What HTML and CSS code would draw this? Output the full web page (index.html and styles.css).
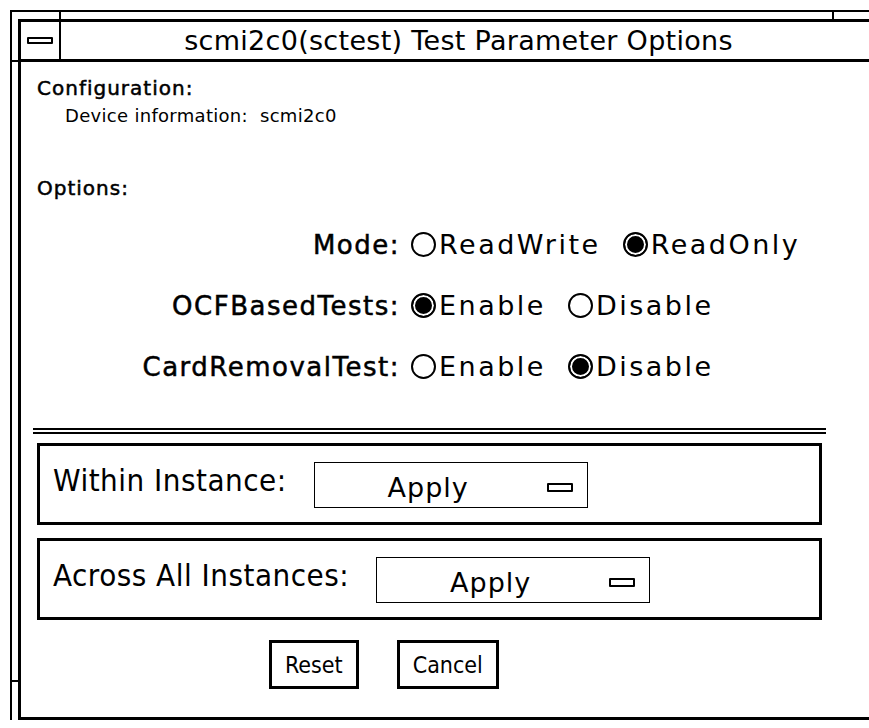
FILE: index.html
```html
<!DOCTYPE html>
<html lang="en">

<head>
    <meta charset="UTF-8">
    <meta name="viewport" content="width=device-width, initial-scale=1.0">
    <title>scmi2c0(sctest) Test Parameter Options</title>
    <link rel="stylesheet" href="styles.css">
</head>

<body>
    <div class="frame">
        <span class="tick tick-top-left"></span>
        <span class="tick tick-top-right"></span>
        <span class="tick tick-left-top"></span>
        <span class="tick tick-left-bottom"></span>
        <span class="tick tick-bottom-left"></span>
        <span class="tick tick-bottom-right"></span>

        <div class="window">
            <div class="titlebar">
                <div class="closebox"><span class="mini-rect"></span></div>
                <div class="title">scmi2c0(sctest) Test Parameter Options</div>
            </div>

            <div class="content">
                <div class="heading">Configuration:</div>
                <div class="info">Device information:&nbsp; scmi2c0</div>

                <div class="heading options-heading">Options:</div>

                <div class="options">
                    <div class="opt-label">Mode:</div>
                    <div class="choices">
                        <span class="choice"><span class="radio"></span>ReadWrite</span>
                        <span class="choice"><span class="radio on"></span>ReadOnly</span>
                    </div>

                    <div class="opt-label">OCFBasedTests:</div>
                    <div class="choices">
                        <span class="choice"><span class="radio on"></span>Enable</span>
                        <span class="choice"><span class="radio"></span>Disable</span>
                    </div>

                    <div class="opt-label">CardRemovalTest:</div>
                    <div class="choices">
                        <span class="choice"><span class="radio"></span>Enable</span>
                        <span class="choice"><span class="radio on"></span>Disable</span>
                    </div>
                </div>

                <div class="separator"></div>

                <div class="group">
                    <span class="group-label">Within Instance:</span>
                    <div class="menu-button">Apply <span class="mini-rect tall"></span></div>
                </div>

                <div class="group">
                    <span class="group-label">Across All Instances:</span>
                    <div class="menu-button">Apply <span class="mini-rect tall"></span></div>
                </div>

                <div class="buttons">
                    <button class="btn">Reset</button>
                    <button class="btn">Cancel</button>
                </div>
            </div>
        </div>
    </div>
</body>

</html>
```

FILE: styles.css
```css
body {
    margin: 0;
    background: #fff;
    color: #000;
    font-family: "DejaVu Sans", "Noto Sans", sans-serif;
    overflow: hidden;
}

.frame {
    position: relative;
    margin: 10px 0 0 10px;
    width: 880px;
    border-top: 2px solid #000;
    border-left: 2px solid #000;
    padding: 7px 0 0 6px;
}

/* resize corner marks between the two frame lines */
.tick {
    position: absolute;
    background: #000;
}

.tick-top-left,
.tick-top-right {
    top: 0;
    width: 2px;
    height: 7px;
}

.tick-top-left {
    left: 47px;
}

.tick-top-right {
    left: 820px;
}

.tick-left-top,
.tick-left-bottom {
    left: 0;
    width: 6px;
    height: 2px;
}

.tick-left-top {
    top: 48px;
}

.tick-left-bottom {
    top: 668px;
}

.tick-bottom-left,
.tick-bottom-right {
    top: 708px;
    width: 2px;
    height: 12px;
}

.tick-bottom-left {
    left: 47px;
}

.tick-bottom-right {
    left: 820px;
}

.window {
    width: 858px;
    height: 701px;
    border: 3px solid #000;
    border-right: none;
    box-sizing: border-box;
}

.titlebar {
    display: flex;
    height: 37px;
    border-bottom: 3px solid #000;
}

.closebox {
    width: 38px;
    border-right: 2px solid #000;
    display: flex;
    align-items: center;
    justify-content: center;
}

.mini-rect {
    display: inline-block;
    width: 22px;
    height: 3px;
    border: 2px solid #000;
    border-radius: 1px;
}

.mini-rect.tall {
    height: 5px;
}

.title {
    flex: 1;
    text-align: center;
    font-size: 27px;
    line-height: 37px;
    margin-left: -20px;
    letter-spacing: 0.3px;
}

.content {
    padding: 14px 0 0 0;
}

.heading {
    font-size: 20px;
    line-height: 24px;
    letter-spacing: 1px;
    -webkit-text-stroke: 0.5px #000;
    padding-left: 16px;
}

.info {
    font-size: 18px;
    line-height: 24px;
    letter-spacing: 0.3px;
    padding-left: 44px;
    margin-top: 4px;
}

.options-heading {
    margin-top: 48px;
}

.options {
    display: grid;
    grid-template-columns: 379px auto;
    grid-auto-rows: 61px;
    column-gap: 11px;
    margin-top: 14px;
    align-items: center;
}

.opt-label {
    text-align: right;
    font-size: 26px;
    letter-spacing: 1.5px;
    -webkit-text-stroke: 0.5px #000;
}

.choices {
    display: flex;
    gap: 22px;
    font-size: 27px;
    letter-spacing: 2.5px;
}

.choice {
    display: flex;
    align-items: center;
    gap: 3px;
}

.radio {
    display: inline-block;
    width: 21px;
    height: 21px;
    border: 2px solid #000;
    border-radius: 50%;
    box-sizing: content-box;
}

.radio.on {
    background: #000;
    box-shadow: inset 0 0 0 2px #fff;
}

.separator {
    margin: 31px 0 0 12px;
    width: 793px;
    height: 2px;
    border-top: 2px solid #000;
    border-bottom: 2px solid #000;
}

.group {
    display: flex;
    align-items: flex-start;
    gap: 27px;
    width: 785px;
    height: 82px;
    margin: 9px 0 0 16px;
    border: 3px solid #000;
    box-sizing: border-box;
    padding: 16px 0 0 13px;
}

.group + .group {
    margin-top: 13px;
}

.group-label {
    font-family: "DejaVu Sans Condensed", "DejaVu Sans", sans-serif;
    font-size: 31px;
    line-height: 36px;
    letter-spacing: 0.5px;
}

.menu-button {
    display: flex;
    align-items: center;
    justify-content: space-between;
    width: 274px;
    height: 46px;
    box-sizing: border-box;
    border: 1.5px solid #000;
    font-size: 27px;
    letter-spacing: 1px;
    padding: 4px 14px 0 73px;
}

.buttons {
    display: flex;
    gap: 38px;
    margin: 20px 0 0 248px;
}

.btn {
    font-family: "DejaVu Sans Condensed", "DejaVu Sans", sans-serif;
    font-size: 23px;
    background: #fff;
    color: #000;
    border: 3px solid #000;
    height: 49px;
    padding: 0 13px;
}
```
